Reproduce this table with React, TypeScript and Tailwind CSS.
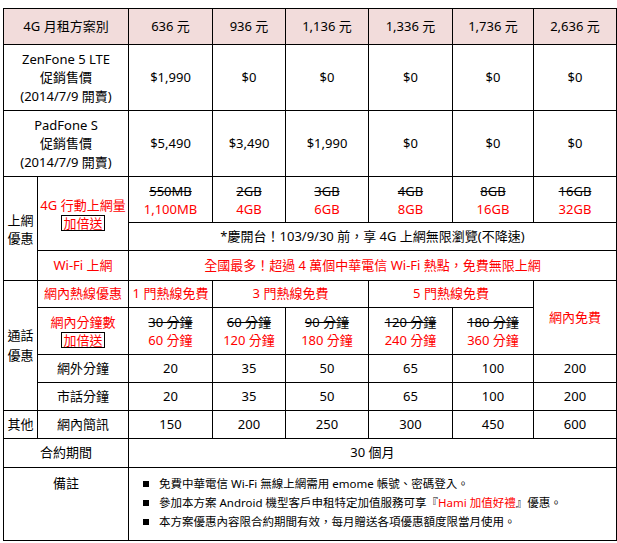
import React from "react";

// 共用樣式
const c = "border border-black p-0 align-middle";
const red = "text-[#ff0000]";

const prices = ["636 元", "936 元", "1,136 元", "1,336 元", "1,736 元", "2,636 元"];
const zenfone = ["$1,990", "$0", "$0", "$0", "$0", "$0"];
const padfone = ["$5,490", "$3,490", "$1,990", "$0", "$0", "$0"];
const data = [
  ["550MB", "1,100MB"],
  ["2GB", "4GB"],
  ["3GB", "6GB"],
  ["4GB", "8GB"],
  ["8GB", "16GB"],
  ["16GB", "32GB"],
];
const minutes = [
  ["30 分鐘", "60 分鐘"],
  ["60 分鐘", "120 分鐘"],
  ["90 分鐘", "180 分鐘"],
  ["120 分鐘", "240 分鐘"],
  ["180 分鐘", "360 分鐘"],
];

function Boxed({ children }: { children: React.ReactNode }) {
  return (
    <span className="mt-[2px] inline-block border border-black px-[1px] leading-[14px]">{children}</span>
  );
}

export default function App() {
  return (
    <div className="min-h-[543px] bg-white pl-[3px] pt-2 font-['Noto_Sans','Noto_Sans_CJK_TC',sans-serif] text-[13px] text-black">
      <table className="w-[614px] table-fixed border-collapse text-center">
        <colgroup>
          <col className="w-[34px]" />
          <col className="w-[91px]" />
          <col className="w-[84px]" />
          <col className="w-[73px]" />
          <col className="w-[83px]" />
          <col className="w-[84px]" />
          <col className="w-[81px]" />
          <col className="w-[83px]" />
        </colgroup>
        <tbody>
          {/* 表頭 */}
          <tr className="h-[36px] bg-[#f2dcdb]">
            <td colSpan={2} className={c}>4G 月租方案別</td>
            {prices.map((p) => (
              <td key={p} className={c}>{p}</td>
            ))}
          </tr>

          <tr className="h-[66px] leading-[18.5px]">
            <td colSpan={2} className={c}>
              ZenFone 5 LTE<br />促銷售價<br />(2014/7/9 開賣)
            </td>
            {zenfone.map((v, i) => (
              <td key={i} className={c}>{v}</td>
            ))}
          </tr>

          <tr className="h-[66px] leading-[18.5px]">
            <td colSpan={2} className={c}>
              PadFone S<br />促銷售價<br />(2014/7/9 開賣)
            </td>
            {padfone.map((v, i) => (
              <td key={i} className={c}>{v}</td>
            ))}
          </tr>

          {/* 上網優惠 */}
          <tr className="h-[46px] leading-[18px]">
            <td rowSpan={3} className={c}>上網<br />優惠</td>
            <td rowSpan={2} className={`${c} ${red} leading-[16px]`}>
              <div>4G 行動上網量</div>
              <Boxed>加倍送</Boxed>
            </td>
            {data.map(([o, n]) => (
              <td key={o} className={c}>
                <div className="line-through">{o}</div>
                <div className={red}>{n}</div>
              </td>
            ))}
          </tr>
          <tr className="h-[28px]">
            <td colSpan={6} className={c}>*慶開台！103/9/30 前，享 4G 上網無限瀏覽(不降速)</td>
          </tr>
          <tr className={`h-[30px] ${red}`}>
            <td className={c}>Wi-Fi 上網</td>
            <td colSpan={6} className={c}>全國最多！超過 4 萬個中華電信 Wi-Fi 熱點，免費無限上網</td>
          </tr>

          {/* 通話優惠 */}
          <tr className="h-[27px]">
            <td rowSpan={4} className={`${c} text-black`}>通話<br />優惠</td>
            <td className={`${c} ${red}`}>網內熱線優惠</td>
            <td className={`${c} ${red}`}>1 門熱線免費</td>
            <td colSpan={2} className={`${c} ${red}`}>3 門熱線免費</td>
            <td colSpan={2} className={`${c} ${red}`}>5 門熱線免費</td>
            <td rowSpan={2} className={`${c} ${red}`}>網內免費</td>
          </tr>
          <tr className="h-[47px] leading-[18px]">
            <td className={`${c} ${red} leading-[16px]`}>
              <div>網內分鐘數</div>
              <Boxed>加倍送</Boxed>
            </td>
            {minutes.map(([o, n]) => (
              <td key={o} className={c}>
                <div className="line-through">{o}</div>
                <div className={red}>{n}</div>
              </td>
            ))}
          </tr>
          <tr className="h-[28px]">
            <td className={c}>網外分鐘</td>
            {["20", "35", "50", "65", "100", "200"].map((v, i) => (
              <td key={i} className={c}>{v}</td>
            ))}
          </tr>
          <tr className="h-[28px]">
            <td className={c}>市話分鐘</td>
            {["20", "35", "50", "65", "100", "200"].map((v, i) => (
              <td key={i} className={c}>{v}</td>
            ))}
          </tr>

          <tr className="h-[28px]">
            <td className={c}>其他</td>
            <td className={c}>網內簡訊</td>
            {["150", "200", "250", "300", "450", "600"].map((v, i) => (
              <td key={i} className={c}>{v}</td>
            ))}
          </tr>

          <tr className="h-[29px]">
            <td colSpan={2} className={c}>合約期間</td>
            <td colSpan={6} className={c}>30 個月</td>
          </tr>

          <tr className="h-[73px]">
            <td colSpan={2} className={`${c} !align-top pt-[6px] leading-[19px]`}>備註</td>
            <td colSpan={6} className={`${c} !align-top pt-[6px] pl-[14px] text-left text-[11.5px] leading-[19px]`}>
              {[
                <>免費中華電信 Wi-Fi 無線上網需用 emome 帳號、密碼登入。</>,
                <>
                  參加本方案 Android 機型客戶申租特定加值服務可享『<span className={red}>Hami 加值好禮</span>』優惠。
                </>,
                <>本方案優惠內容限合約期間有效，每月贈送各項優惠額度限當月使用。</>,
              ].map((t, i) => (
                <div key={i} className="flex items-center">
                  <span className="mr-[10px] inline-block h-[6px] w-[6px] bg-black" />
                  <span>{t}</span>
                </div>
              ))}
            </td>
          </tr>
        </tbody>
      </table>
    </div>
  );
}
